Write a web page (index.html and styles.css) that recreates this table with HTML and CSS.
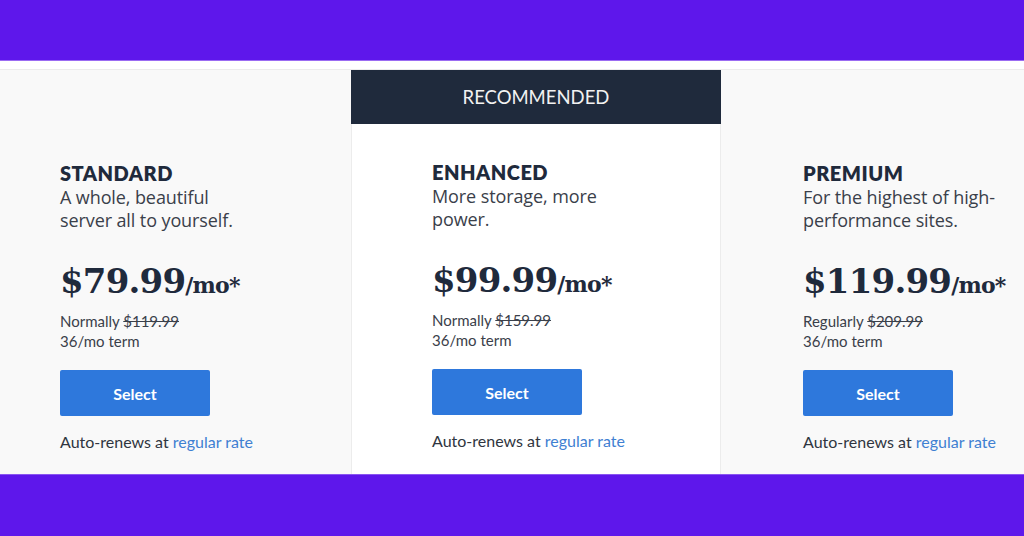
FILE: index.html
```html
<!DOCTYPE html>
<html>
<head>
<meta charset="utf-8">
<link rel="stylesheet" href="styles.css">
</head>
<body>
<div class="band band-top"></div>
<div class="strip"></div>
<div class="plans">
  <div class="plan plan-left">
    <div class="plan-body">
      <h2 class="plan-name">STANDARD</h2>
      <p class="plan-desc">A whole, beautiful<br>server all to yourself.</p>
      <div class="price"><span class="amount">$79.99</span><span class="per">/mo*</span></div>
      <p class="normal">Normally <s>$119.99</s></p>
      <p class="term">36/mo term</p>
      <button class="select">Select</button>
      <p class="renew">Auto-renews at <a href="#">regular rate</a></p>
    </div>
  </div>
  <div class="plan plan-mid">
    <div class="rec">RECOMMENDED</div>
    <div class="plan-body">
      <h2 class="plan-name">ENHANCED</h2>
      <p class="plan-desc">More storage, more<br>power.</p>
      <div class="price"><span class="amount">$99.99</span><span class="per">/mo*</span></div>
      <p class="normal">Normally <s>$159.99</s></p>
      <p class="term">36/mo term</p>
      <button class="select">Select</button>
      <p class="renew">Auto-renews at <a href="#">regular rate</a></p>
    </div>
  </div>
  <div class="plan plan-right">
    <div class="plan-body">
      <h2 class="plan-name">PREMIUM</h2>
      <p class="plan-desc">For the highest of high-<br>performance sites.</p>
      <div class="price"><span class="amount">$119.99</span><span class="per">/mo*</span></div>
      <p class="normal">Regularly <s>$209.99</s></p>
      <p class="term">36/mo term</p>
      <button class="select">Select</button>
      <p class="renew">Auto-renews at <a href="#">regular rate</a></p>
    </div>
  </div>
</div>
<div class="band band-bottom"></div>
</body>
</html>
```
FILE: styles.css
```css
* { box-sizing: border-box; }
html, body { margin: 0; padding: 0; }
body {
  width: 1024px;
  height: 536px;
  overflow: hidden;
  background: #fff;
  font-family: "Lato", "Open Sans", sans-serif;
  color: #1f2a3c;
}
.band { background: #5e17eb; }
.band-top { height: 61px; border-bottom: 1px solid #9b6cf2; }
.band-bottom { height: 62px; border-top: 1px solid #8a55f0; }
.strip { height: 9px; background: #fff; border-bottom: 1px solid #ececec; }
.plans {
  display: grid;
  grid-template-columns: 351px 370px 1fr;
  height: 404px;
  background: #f9f9f9;
}
.plan { display: flex; flex-direction: column; }
.plan-left .plan-body { padding: 93px 0 0 60px; }
.plan-mid {
  background: #fff;
  border-left: 1px solid #ececec;
  border-right: 1px solid #ececec;
}
.plan-mid .plan-body { padding: 38px 0 0 80px; }
.plan-right .plan-body { padding: 93px 0 0 82px; }
.rec {
  height: 54px;
  background: #1f2a3c;
  color: #f2f2f2;
  font-family: "Lato", sans-serif;
  font-size: 18.5px;
  display: flex;
  align-items: center;
  justify-content: center;
  margin-left: -1px;
  margin-right: -1px;
}
.plan-name {
  margin: 0;
  font-size: 20px;
  line-height: 20px;
  font-weight: 800;
  color: #1f2a3c;
  letter-spacing: 0.5px;
}
.plan-desc {
  margin: 3px 0 0;
  font-family: "Open Sans", sans-serif;
  font-size: 18px;
  line-height: 23px;
  color: #3a404a;
  letter-spacing: -0.1px;
}
.price {
  margin-top: 29px;
  display: flex;
  align-items: baseline;
  font-family: "DejaVu Serif", serif;
  font-weight: bold;
  color: #1f2a3c;
  height: 40px;
}
.amount { font-size: 34px; letter-spacing: -0.8px; }
.per { font-size: 22px; letter-spacing: -0.8px; }
.normal, .term {
  margin: 0;
  font-size: 15px;
  line-height: 20px;
  color: #3a404a;
}
.normal { margin-top: 10px; }
.normal s { color: #3a404a; }
.select {
  display: block;
  margin-top: 19px;
  width: 150px;
  height: 46px;
  border: none;
  border-radius: 2px;
  background: #2e78dc;
  color: #fff;
  font-family: "Lato", sans-serif;
  font-size: 16px;
  font-weight: bold;
}
.renew {
  margin: 16px 0 0;
  font-size: 16px;
  line-height: 20px;
  color: #2f3540;
}
.renew a { color: #3f80d2; text-decoration: none; }
```
